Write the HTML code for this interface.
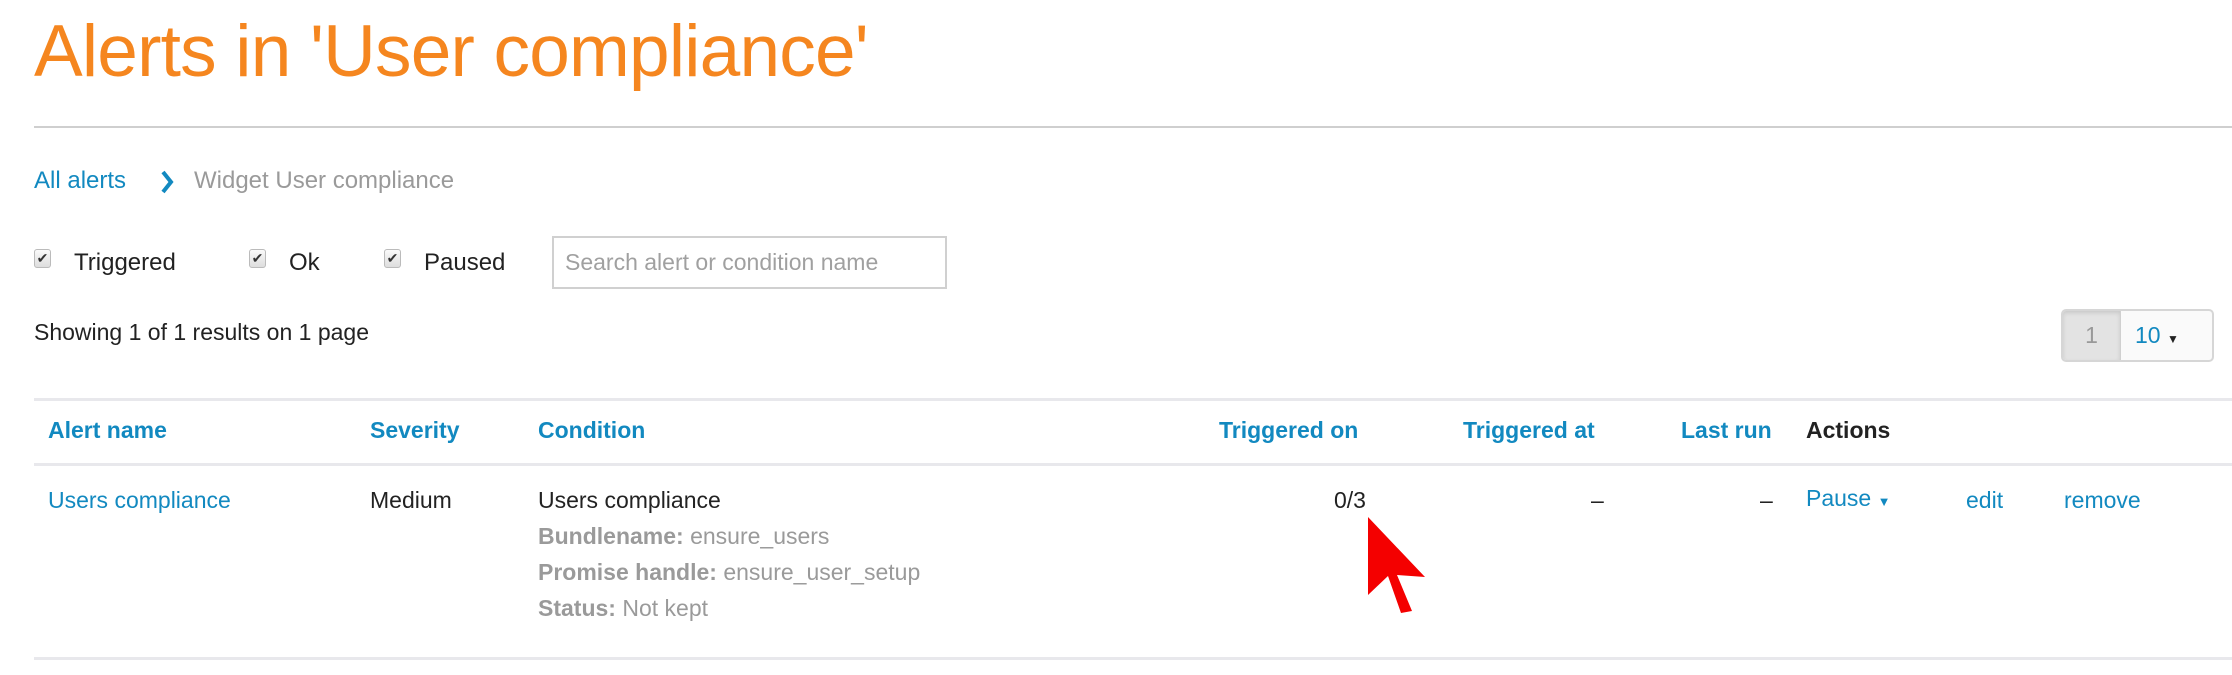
<!DOCTYPE html>
<html><head><meta charset="utf-8"><style>
*{margin:0;padding:0;box-sizing:border-box}
body{width:2232px;height:675px;background:#fff;position:relative;overflow:hidden;font-family:"Liberation Sans",sans-serif;font-size:23px;color:#222}
.a{position:absolute;white-space:nowrap}
.b{color:#1289c0}
.g{color:#9a9a9a}
.h{font-weight:bold;color:#1289c0}
.line{position:absolute;left:34px;right:0;height:3px;background:#e8e8ec}
.cb{position:absolute;width:17px;height:19px;border:1px solid #bbb;border-radius:3px;background:linear-gradient(#fafafa,#ddd);font-size:14px;line-height:17px;text-align:center;color:#333}
</style></head><body>
<div class="a" style="left:34px;top:10px;font-size:73px;color:#f5861f;letter-spacing:-0.8px">Alerts in 'User compliance'</div>
<div style="position:absolute;left:34px;right:0;top:126px;height:2px;background:#cfcfcf"></div>
<div class="a b" style="left:34px;top:167px;font-size:24px">All alerts</div>
<svg class="a" style="left:160px;top:170px" width="16" height="24"><path d="M3 2 L11 12 L3 22" fill="none" stroke="#1289c0" stroke-width="4"/></svg>
<div class="a g" style="left:194px;top:167px;font-size:24px">Widget User compliance</div>

<div class="cb" style="left:34px;top:249px">✔</div>
<div class="a" style="left:74px;top:249px;font-size:24px">Triggered</div>
<div class="cb" style="left:249px;top:249px">✔</div>
<div class="a" style="left:289px;top:249px;font-size:24px">Ok</div>
<div class="cb" style="left:384px;top:249px">✔</div>
<div class="a" style="left:424px;top:249px;font-size:24px">Paused</div>
<div class="a" style="left:552px;top:236px;width:395px;height:53px;border:2px solid #d0d0d0"></div>
<div class="a g" style="left:565px;top:249px;font-size:23px;color:#a0a0a0">Search alert or condition name</div>

<div class="a" style="left:34px;top:319px;font-size:23px">Showing 1 of 1 results on 1 page</div>

<div class="a" style="left:2061px;top:309px;width:153px;height:53px;border:2px solid #d6d6d6;border-radius:5px;overflow:hidden;background:#fafafa">
 <div style="position:absolute;left:0;top:0;width:57px;height:100%;background:#e3e3e3;box-shadow:inset 0 2px 4px rgba(0,0,0,.12);color:#999;text-align:center;line-height:49px;font-size:23px">1</div>
 <div style="position:absolute;left:57px;top:0;width:1px;height:100%;background:#d0d0d0"></div>
 <div class="b" style="position:absolute;left:72px;top:0;line-height:49px;font-size:23px">10 <span style="font-size:12px;color:#222">▼</span></div>
</div>

<div class="line" style="top:398px"></div>
<div class="a h" style="left:48px;top:417px">Alert name</div>
<div class="a h" style="left:370px;top:417px">Severity</div>
<div class="a h" style="left:538px;top:417px">Condition</div>
<div class="a h" style="left:1219px;top:417px">Triggered on</div>
<div class="a h" style="left:1463px;top:417px">Triggered at</div>
<div class="a h" style="left:1681px;top:417px">Last run</div>
<div class="a" style="left:1806px;top:417px;font-weight:bold">Actions</div>
<div class="line" style="top:463px"></div>

<div class="a b" style="left:48px;top:487px">Users compliance</div>
<div class="a" style="left:370px;top:487px">Medium</div>
<div class="a" style="left:538px;top:487px">Users compliance</div>
<div class="a g" style="left:538px;top:523px"><b>Bundlename:</b> ensure_users</div>
<div class="a g" style="left:538px;top:559px"><b>Promise handle:</b> ensure_user_setup</div>
<div class="a g" style="left:538px;top:595px"><b>Status:</b> Not kept</div>
<div class="a" style="left:1334px;top:487px">0/3</div>
<div class="a" style="left:1591px;top:487px">–</div>
<div class="a" style="left:1760px;top:487px">–</div>
<div class="a b" style="left:1806px;top:485px">Pause <span style="font-size:13px">▼</span></div>
<div class="a b" style="left:1966px;top:487px">edit</div>
<div class="a b" style="left:2064px;top:487px">remove</div>
<div class="line" style="top:657px"></div>

<svg class="a" style="left:0;top:0" width="2232" height="675"><path d="M1368 517 L1368 595 L1388 576 L1401 613 L1412 611 L1397 575 L1425 577 Z" fill="#f40000"/></svg>
</body></html>
